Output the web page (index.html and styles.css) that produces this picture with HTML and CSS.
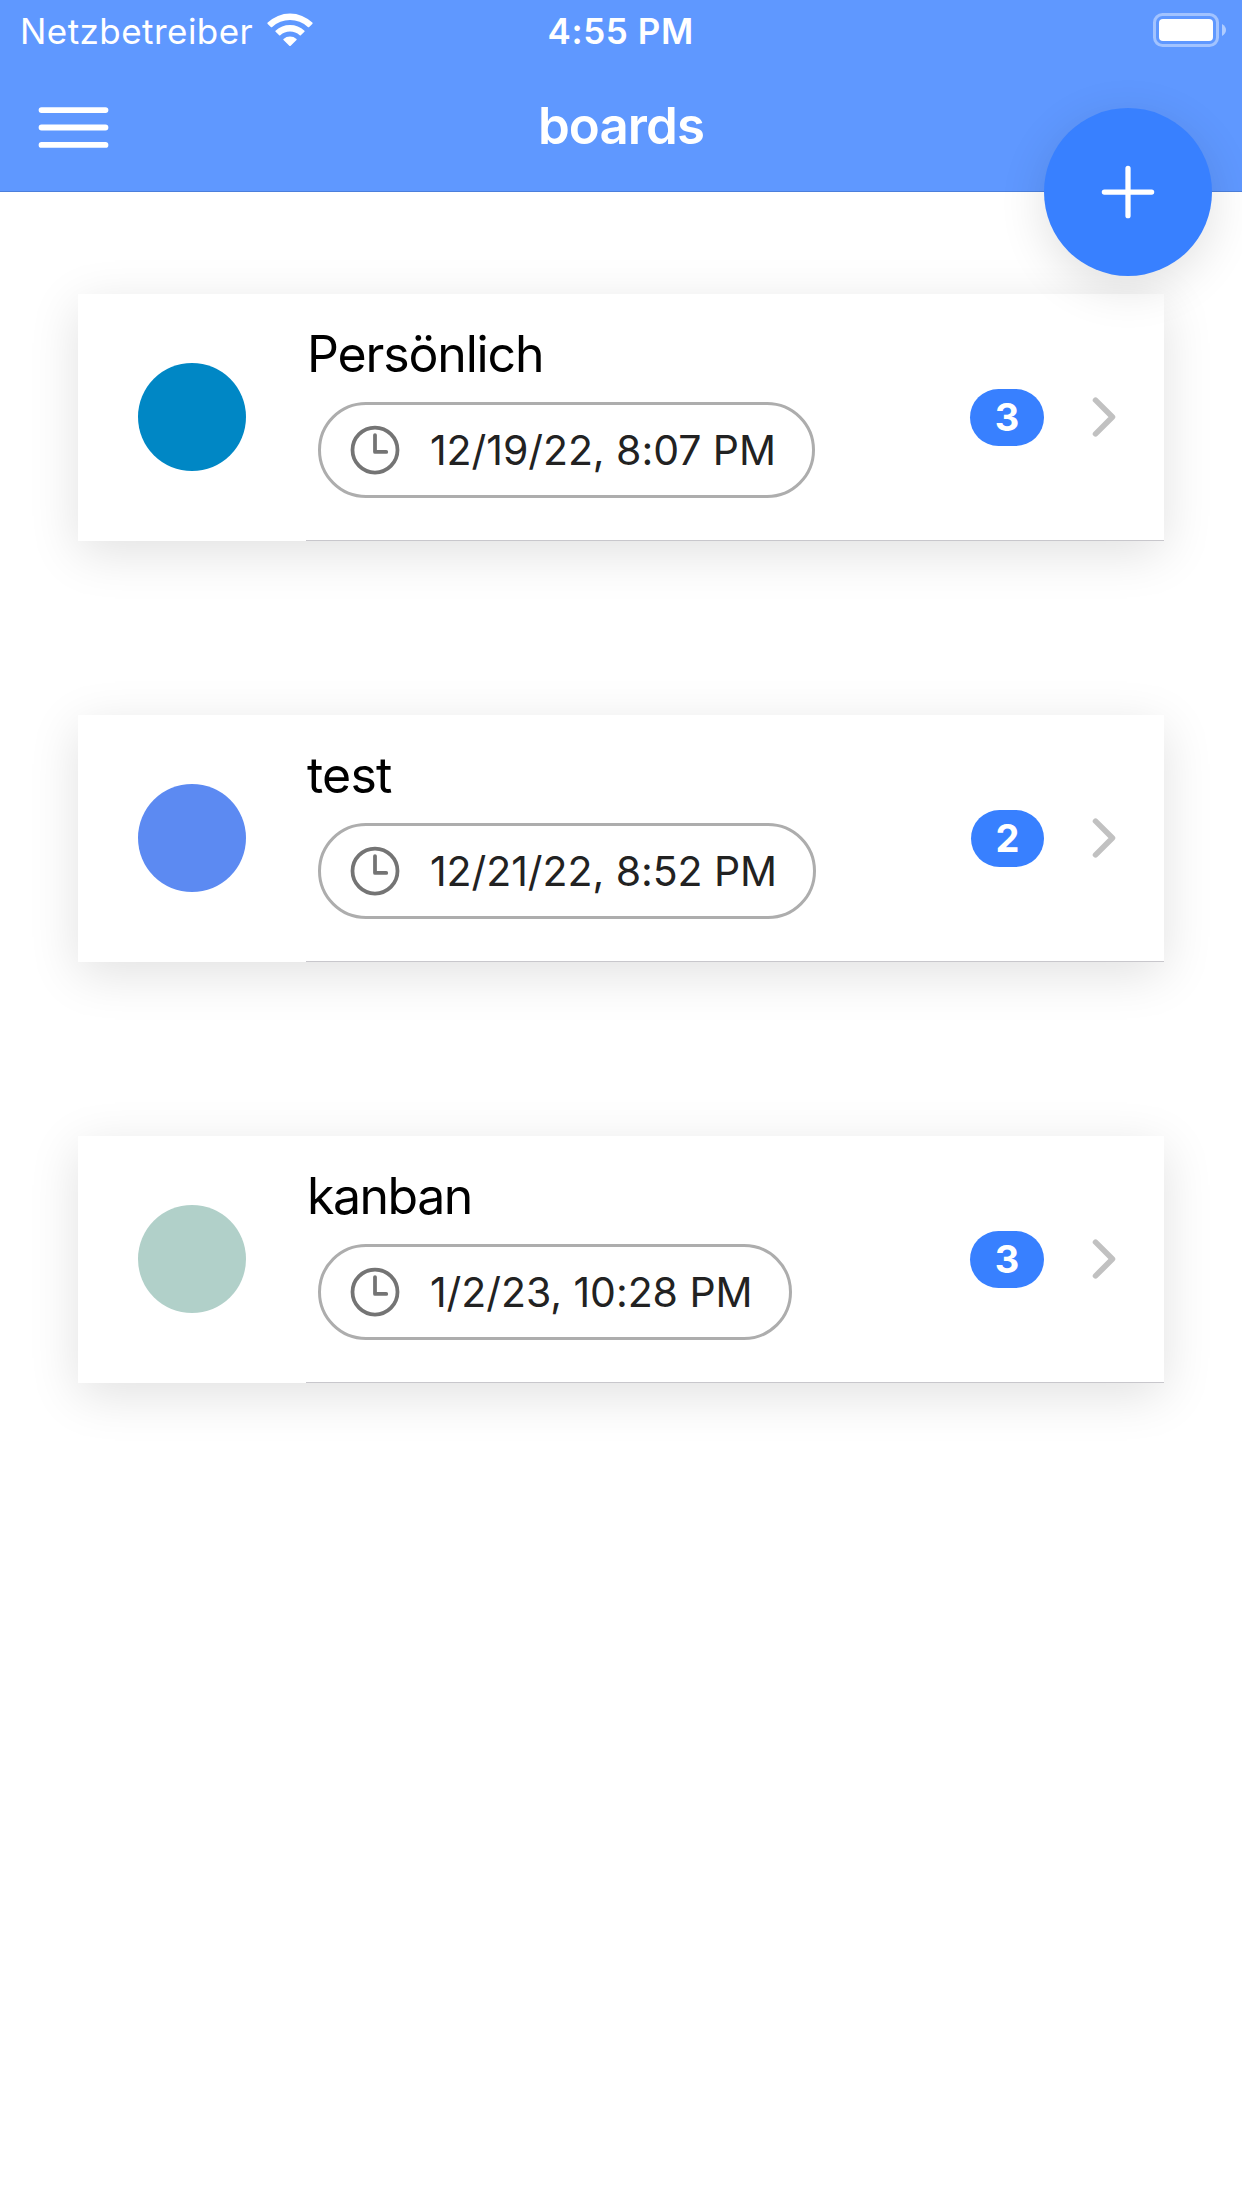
FILE: index.html
```html
<!DOCTYPE html>
<html lang="en">
<head>
<meta charset="utf-8">
<title>boards</title>
<link rel="stylesheet" href="styles.css">
</head>
<body>
<svg class="sprite" aria-hidden="true">
  <symbol id="time" viewBox="0 0 512 512">
    <circle cx="256" cy="256" r="192" fill="none" stroke="currentColor" stroke-width="32"/>
    <path d="M256 128v144h96" fill="none" stroke="currentColor" stroke-width="32" stroke-linecap="round" stroke-linejoin="round"/>
  </symbol>
  <symbol id="chevron" viewBox="0 0 512 512">
    <path d="M184 112l144 144-144 144" fill="none" stroke="currentColor" stroke-width="48" stroke-linecap="round" stroke-linejoin="round"/>
  </symbol>
</svg>
<header class="header">
  <div class="status">
    <div class="carrier">
      <span class="carrier-name">Netzbetreiber</span>
      <svg class="wifi" viewBox="0 0 46 34" fill="currentColor">
        <path d="M.7 9.600A32 32 0 0 1 45.300 9.600Q46 10.200 45.300 10.900L42.200 14Q41.500 14.500 40.800 13.900A26.200 26.200 0 0 0 5.200 13.900Q4.500 14.500 3.800 14L.7 10.900Q0 10.200 .7 9.600Z"/>
        <path d="M8.500 17.700A21.500 21.500 0 0 1 37.500 17.700Q38 18.200 37.400 18.800L33.800 22.300Q33.300 22.700 32.700 22.200A14.600 14.600 0 0 0 13.300 22.200Q12.700 22.700 12.200 22.300L8.600 18.800Q8 18.200 8.500 17.700Z"/>
        <path d="M16.500 25.900A10 10 0 0 1 29.500 25.900Q30 26.400 29.500 26.900L23.700 32.700Q23 33.300 22.300 32.700L16.500 26.900Q16 26.400 16.500 25.900Z"/>
      </svg>
    </div>
    <span class="clock">4:55 PM</span>
    <svg class="battery" viewBox="0 0 74 34">
      <rect x="1.500" y="1.500" width="63" height="31" rx="8" fill="none" stroke="#fff" stroke-opacity=".42" stroke-width="3"/>
      <rect x="6" y="6" width="54" height="22" rx="4" fill="#fff"/>
      <path d="M69 11Q73 13.500 73 17T69 23Z" fill="#fff" fill-opacity=".5"/>
    </svg>
  </div>
  <nav class="toolbar">
    <svg class="menu" viewBox="0 0 512 512"><path d="M80 160h352M80 256h352M80 352h352" stroke="currentColor" stroke-width="32" stroke-linecap="round"/></svg>
    <h1 class="title">boards</h1>
  </nav>
</header>
<button class="fab" aria-label="Add">
  <svg class="plus" viewBox="0 0 512 512"><path d="M256 112v288M400 256H112" stroke="currentColor" stroke-width="32" stroke-linecap="round"/></svg>
</button>
<main class="boards">
  <article class="card">
    <span class="dot blue"></span>
    <div class="item">
      <div class="info">
        <h2 class="name name-long">Persönlich</h2>
        <div class="chip"><svg class="time"><use href="#time"/></svg><span>12/19/22, 8:07 PM</span></div>
      </div>
      <span class="badge">3</span>
      <svg class="chevron"><use href="#chevron"/></svg>
    </div>
  </article>
  <article class="card">
    <span class="dot indigo"></span>
    <div class="item">
      <div class="info">
        <h2 class="name name-short">test</h2>
        <div class="chip"><svg class="time"><use href="#time"/></svg><span>12/21/22, 8:52 PM</span></div>
      </div>
      <span class="badge badge-narrow">2</span>
      <svg class="chevron"><use href="#chevron"/></svg>
    </div>
  </article>
  <article class="card">
    <span class="dot mint"></span>
    <div class="item">
      <div class="info">
        <h2 class="name">kanban</h2>
        <div class="chip"><svg class="time"><use href="#time"/></svg><span>1/2/23, 10:28 PM</span></div>
      </div>
      <span class="badge">3</span>
      <svg class="chevron"><use href="#chevron"/></svg>
    </div>
  </article>
</main>
</body>
</html>
```

FILE: styles.css
```css
* { box-sizing: border-box; }
body {
  margin: 0;
  min-height: 2208px;
  position: relative;
  background: #fff;
  font-family: Inter, "Liberation Sans", sans-serif;
  color: #000;
}
svg { display: block; flex: none; }
.sprite { position: absolute; width: 0; height: 0; }
.header {
  height: 192px;
  background: #5f98ff;
  border-bottom: 1px solid #4c7fdb;
  color: #fff;
}
.status {
  height: 60px;
  padding: 0 15px 0 20px;
  display: grid;
  grid-template-columns: 1fr 150px 1fr;
  grid-template-rows: 60px;
  align-items: center;
  font-size: 35px;
  line-height: 60px;
}
.carrier { display: flex; gap: 13px; height: 60px; }
.carrier-name {
  width: 234px;
  padding-top: 1px;
  letter-spacing: 0.45px;
  white-space: nowrap;
}
.wifi { width: 46px; height: 34px; margin-top: 13px; }
.clock {
  margin: 2px 0 0 -1px;
  font-weight: 600;
  letter-spacing: 0.6px;
  white-space: nowrap;
}
.battery { width: 74px; height: 34px; justify-self: end; }
.toolbar {
  height: 131px;
  padding: 0 27px;
  display: grid;
  grid-template-columns: 1fr auto 1fr;
  align-items: center;
}
.menu { width: 93px; height: 93px; margin-top: 4px; }
.title {
  margin: 1px 0 0;
  font-size: 51px;
  line-height: 60px;
  font-weight: 600;
  letter-spacing: -0.9px;
}
.fab {
  position: absolute;
  z-index: 2;
  top: 108px;
  right: 30px;
  width: 168px;
  height: 168px;
  padding: 0;
  border: 0;
  border-radius: 50%;
  display: grid;
  place-items: center;
  background: #3880ff;
  color: #fff;
  box-shadow: 0 12px 48px rgba(0, 0, 0, .12);
}
.plus { width: 84px; height: 84px; }
.boards {
  padding: 102px 78px 0;
  display: flex;
  flex-direction: column;
  gap: 174px;
}
.card {
  height: 247px;
  padding-left: 60px;
  display: flex;
  align-items: center;
  gap: 60px;
  background: #fff;
  box-shadow: 0 12px 48px rgba(0, 0, 0, .12);
}
.dot {
  width: 108px;
  height: 108px;
  margin-bottom: 1px;
  border-radius: 50%;
  flex: none;
}
.blue { background: #0087c5; }
.indigo { background: #5c8af2; }
.mint { background: #b1d0c9; }
.item {
  flex: 1;
  height: 247px;
  display: flex;
  align-items: center;
  padding-right: 30px;
  border-bottom: 1px solid #c8c7cc;
}
.info { flex: 1; height: 246px; padding-top: 30px; }
.name {
  margin: 0 0 0 1px;
  font-size: 50px;
  line-height: 60px;
  font-weight: 400;
  letter-spacing: -1.5px;
}
.name-long { letter-spacing: -1.15px; }
.name-short { letter-spacing: -0.8px; }
.chip {
  width: fit-content;
  height: 96px;
  margin: 18px 12px 0;
  padding: 0 36px 0 24px;
  border: 3px solid #adadad;
  border-radius: 48px;
  display: flex;
  align-items: center;
  gap: 25px;
  font-size: 41px;
  letter-spacing: -0.06px;
  color: #222;
  white-space: nowrap;
}
.time { width: 60px; height: 60px; color: #747474; }
.badge {
  width: 74px;
  height: 57px;
  margin-right: 30px;
  border-radius: 30px;
  background: #3880ff;
  color: #fff;
  font-size: 38px;
  font-weight: 700;
  line-height: 57px;
  text-align: center;
}
.badge-narrow { width: 73px; }
.chevron { width: 60px; height: 60px; color: #c1c1c1; }
```
